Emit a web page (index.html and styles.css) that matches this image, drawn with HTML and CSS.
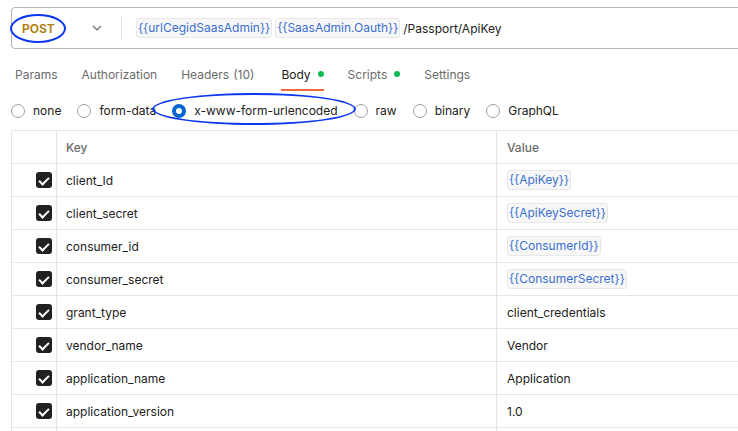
FILE: index.html
```html
<!DOCTYPE html>
<html>
<head>
<meta charset="utf-8">
<link rel="stylesheet" href="styles.css">
</head>
<body>
<div class="page">
  <div class="urlbar">
    <div class="method">POST</div>
    <div class="chev"><svg width="10" height="6" viewBox="0 0 10 6"><path d="M1 1 L5 5 L9 1" fill="none" stroke="#6b6b6b" stroke-width="1.2"/></svg></div>
    <div class="sep"></div>
    <div class="url">
      <span class="var">{{urlCegidSaasAdmin}}</span>
      <span class="var">{{SaasAdmin.Oauth}}</span>
      <span class="path">/Passport/ApiKey</span>
    </div>
  </div>

  <div class="tabs">
    <div class="tab">Params</div>
    <div class="tab">Authorization</div>
    <div class="tab">Headers <span class="count">(10)</span></div>
    <div class="tab active">Body <span class="dot"></span></div>
    <div class="tab">Scripts <span class="dot"></span></div>
    <div class="tab">Settings</div>
  </div>

  <div class="radios">
    <div class="radio"><span class="circle"></span>none</div>
    <div class="radio"><span class="circle"></span>form-data</div>
    <div class="radio"><span class="circle on"></span>x-www-form-urlencoded</div>
    <div class="radio"><span class="circle"></span>raw</div>
    <div class="radio"><span class="circle"></span>binary</div>
    <div class="radio"><span class="circle"></span>GraphQL</div>
  </div>

  <div class="table">
    <div class="row head">
      <div class="c1"></div>
      <div class="c2">Key</div>
      <div class="c3">Value</div>
    </div>
    <div class="row"><div class="c1"><span class="cb"></span></div><div class="c2">client_Id</div><div class="c3"><span class="var">{{ApiKey}}</span></div></div>
    <div class="row"><div class="c1"><span class="cb"></span></div><div class="c2">client_secret</div><div class="c3"><span class="var">{{ApiKeySecret}}</span></div></div>
    <div class="row"><div class="c1"><span class="cb"></span></div><div class="c2">consumer_id</div><div class="c3"><span class="var">{{ConsumerId}}</span></div></div>
    <div class="row"><div class="c1"><span class="cb"></span></div><div class="c2">consumer_secret</div><div class="c3"><span class="var">{{ConsumerSecret}}</span></div></div>
    <div class="row"><div class="c1"><span class="cb"></span></div><div class="c2">grant_type</div><div class="c3">client_credentials</div></div>
    <div class="row"><div class="c1"><span class="cb"></span></div><div class="c2">vendor_name</div><div class="c3">Vendor</div></div>
    <div class="row"><div class="c1"><span class="cb"></span></div><div class="c2">application_name</div><div class="c3">Application</div></div>
    <div class="row"><div class="c1"><span class="cb"></span></div><div class="c2">application_version</div><div class="c3">1.0</div></div>
    <div class="row"><div class="c1"></div><div class="c2"></div><div class="c3"></div></div>
  </div>

  <div class="mark mark-post"></div>
  <div class="mark mark-body"></div>
</div>
</body>
</html>
```

FILE: styles.css
```css
* { box-sizing: border-box; }
html, body { margin: 0; padding: 0; background: #fff; overflow: hidden; }
body {
  font-family: Inter, "Noto Sans", "Liberation Sans", sans-serif;
  font-size: 12px;
  color: #212121;
}
.page { position: relative; width: 738px; height: 431px; overflow: hidden; padding-top: 7px; }

.urlbar {
  display: flex;
  align-items: center;
  height: 42px;
  margin-left: 11px;
  margin-right: -20px;
  border: 1px solid #b8b8b8;
  border-radius: 4px;
}
.method {
  color: #ad7a03;
  font-weight: 600;
  padding-left: 10px;
  width: 80px;
}
.chev { width: 29px; display: flex; align-items: center; }
.sep { width: 1px; height: 24px; background: #e0e0e0; }
.url { display: flex; align-items: center; gap: 3px; padding-left: 14px; }
.var {
  display: inline-block;
  color: #3a6fd0;
  background: #f7f7f7;
  border: 1px solid #e8e8e8;
  border-radius: 3px;
  padding: 1px 1px;
  line-height: 16px;
}
.path { color: #212121; }

.tabs {
  display: flex;
  height: 34px;
  margin-top: 8px;
  padding-left: 15px;
  gap: 24px;
  align-items: stretch;
}
.tab {
  color: #6b6b6b;
  display: flex;
  align-items: center;
  border-bottom: 2px solid transparent;
  padding-top: 2px;
}
.tab .count { color: #6b6b6b; margin-left: 4px; }
.tab.active { color: #212121; border-bottom-color: #f26b3a; margin-left: 3px; }
.dot { display: inline-block; width: 6px; height: 6px; border-radius: 50%; background: #0cbb52; margin-left: 7px; }

.radios {
  display: flex;
  align-items: center;
  height: 39px;
  padding-left: 11px;
  gap: 16px;
  color: #212121;
}
.radio { display: flex; align-items: center; }
.circle {
  width: 14px; height: 14px;
  border: 1px solid #a0a0a0;
  border-radius: 50%;
  margin-right: 8px;
  display: inline-block;
}
.circle.on { border: 4px solid #0265d2; }

.table {
  margin-left: 11px;
  margin-top: 0;
  border-top: 1px solid #e6e6e6;
  border-left: 1px solid #e6e6e6;
}
.row {
  display: grid;
  grid-template-columns: 45px 440px 1fr;
  height: 33px;
  border-bottom: 1px solid #e6e6e6;
}
.row > div { display: flex; align-items: center; }
.c1 { border-right: 1px solid #e6e6e6; justify-content: flex-end; padding-right: 4px; }
.c2 { border-right: 1px solid #e6e6e6; padding-left: 9px; }
.c3 { padding-left: 10px; }
.head .c2, .head .c3 { color: #6b6b6b; font-weight: 500; }
.cb {
  width: 16px; height: 16px;
  background: #212121;
  border-radius: 3px;
  position: relative;
}
.cb::after {
  content: "";
  position: absolute;
  left: 5px; top: 2.5px;
  width: 4px; height: 8px;
  border: solid #fff;
  border-width: 0 2px 2px 0;
  transform: rotate(45deg);
}

.mark {
  position: absolute;
  border: 2.5px solid #0a36f0;
  border-radius: 50%;
}
.mark-post { left: 10px; top: 14px; width: 56px; height: 29px; }
.mark-body { left: 152px; top: 93px; width: 204px; height: 32px; }
```
